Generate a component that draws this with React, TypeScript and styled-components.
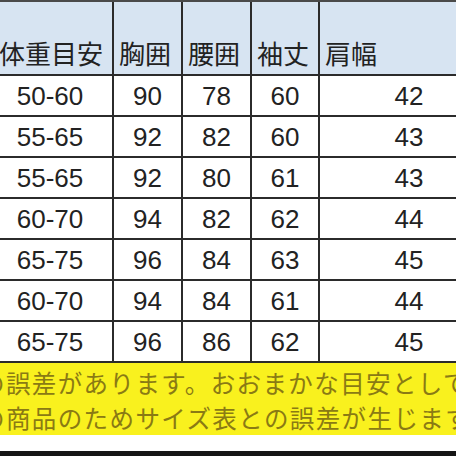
import React from "react";
import styled, { createGlobalStyle } from "styled-components";

const Global = createGlobalStyle`
  html, body {
    margin: 0;
    padding: 0;
    width: 456px;
    height: 456px;
    overflow: hidden;
    background: #ffffff;
  }
`;

const Page = styled.div`
  width: 456px;
  height: 456px;
  overflow: hidden;
  display: flex;
  flex-direction: column;
  background: #ffffff;
`;

const TopStrip = styled.div`
  height: 2px;
  flex: none;
  background: #4a4a4a;
`;

const Table = styled.div`
  flex: none;
  display: grid;
  grid-template-columns: 126px 69px 69px 68px 180px;
  grid-auto-rows: 41px;
  grid-template-rows: 74px;
  margin-left: -12px;
  width: 512px;
`;

const Cell = styled.div<{ $header?: boolean; $pad?: number }>`
  box-sizing: border-box;
  border-right: 2px solid #2b2b2b;
  border-bottom: 2px solid #2b2b2b;
  display: flex;
  align-items: ${(p) => (p.$header ? "flex-end" : "center")};
  justify-content: ${(p) => (p.$header ? "flex-start" : "center")};
  padding-left: ${(p) => (p.$header ? `${p.$pad ?? 5}px` : "0")};
  padding-bottom: ${(p) => (p.$header ? "8px" : "0")};
  background: ${(p) => (p.$header ? "#d7e4f2" : "#ffffff")};
  color: #222222;
  font-family: ${(p) =>
    p.$header
      ? `"Noto Sans CJK JP", "Noto Sans", sans-serif`
      : `"Liberation Sans", Arial, sans-serif`};
  font-size: 26px;
  line-height: 26px;
  white-space: nowrap;
  overflow: hidden;
`;

const Note = styled.div`
  flex: none;
  height: 72px;
  box-sizing: border-box;
  padding-top: 2px;
  background: #f9f11e;
  color: #8a7a14;
  font-family: "Noto Sans CJK JP", "Noto Sans", sans-serif;
  font-size: 24.5px;
  letter-spacing: 1.4px;
  line-height: 35px;
  white-space: nowrap;
  overflow: hidden;
`;

const NoteLine = styled.div`
  margin-left: -20px;
`;

const Spacer = styled.div`
  flex: none;
  height: 16px;
  background: #ffffff;
`;

const BottomStrip = styled.div`
  flex: none;
  height: 5px;
  background: #151515;
`;

const headers = ["体重目安", "胸囲", "腰囲", "袖丈", "肩幅"];

const rows: string[][] = [
  ["50-60", "90", "78", "60", "42"],
  ["55-65", "92", "82", "60", "43"],
  ["55-65", "92", "80", "61", "43"],
  ["60-70", "94", "82", "62", "44"],
  ["65-75", "96", "84", "63", "45"],
  ["60-70", "94", "84", "61", "44"],
  ["65-75", "96", "86", "62", "45"],
];

export default function App() {
  return (
    <Page>
      <Global />
      <TopStrip />
      <Table>
        {headers.map((h, i) => (
          <Cell key={h} $header $pad={i === 0 ? 11 : 5}>
            {h}
          </Cell>
        ))}
        {rows.map((r, ri) =>
          r.map((v, ci) => <Cell key={`${ri}-${ci}`}>{v}</Cell>)
        )}
      </Table>
      <Note>
        <NoteLine>の誤差があります。おおまかな目安としてご参考ください。</NoteLine>
        <NoteLine>の商品のためサイズ表との誤差が生じます。</NoteLine>
      </Note>
      <Spacer />
      <BottomStrip />
    </Page>
  );
}
